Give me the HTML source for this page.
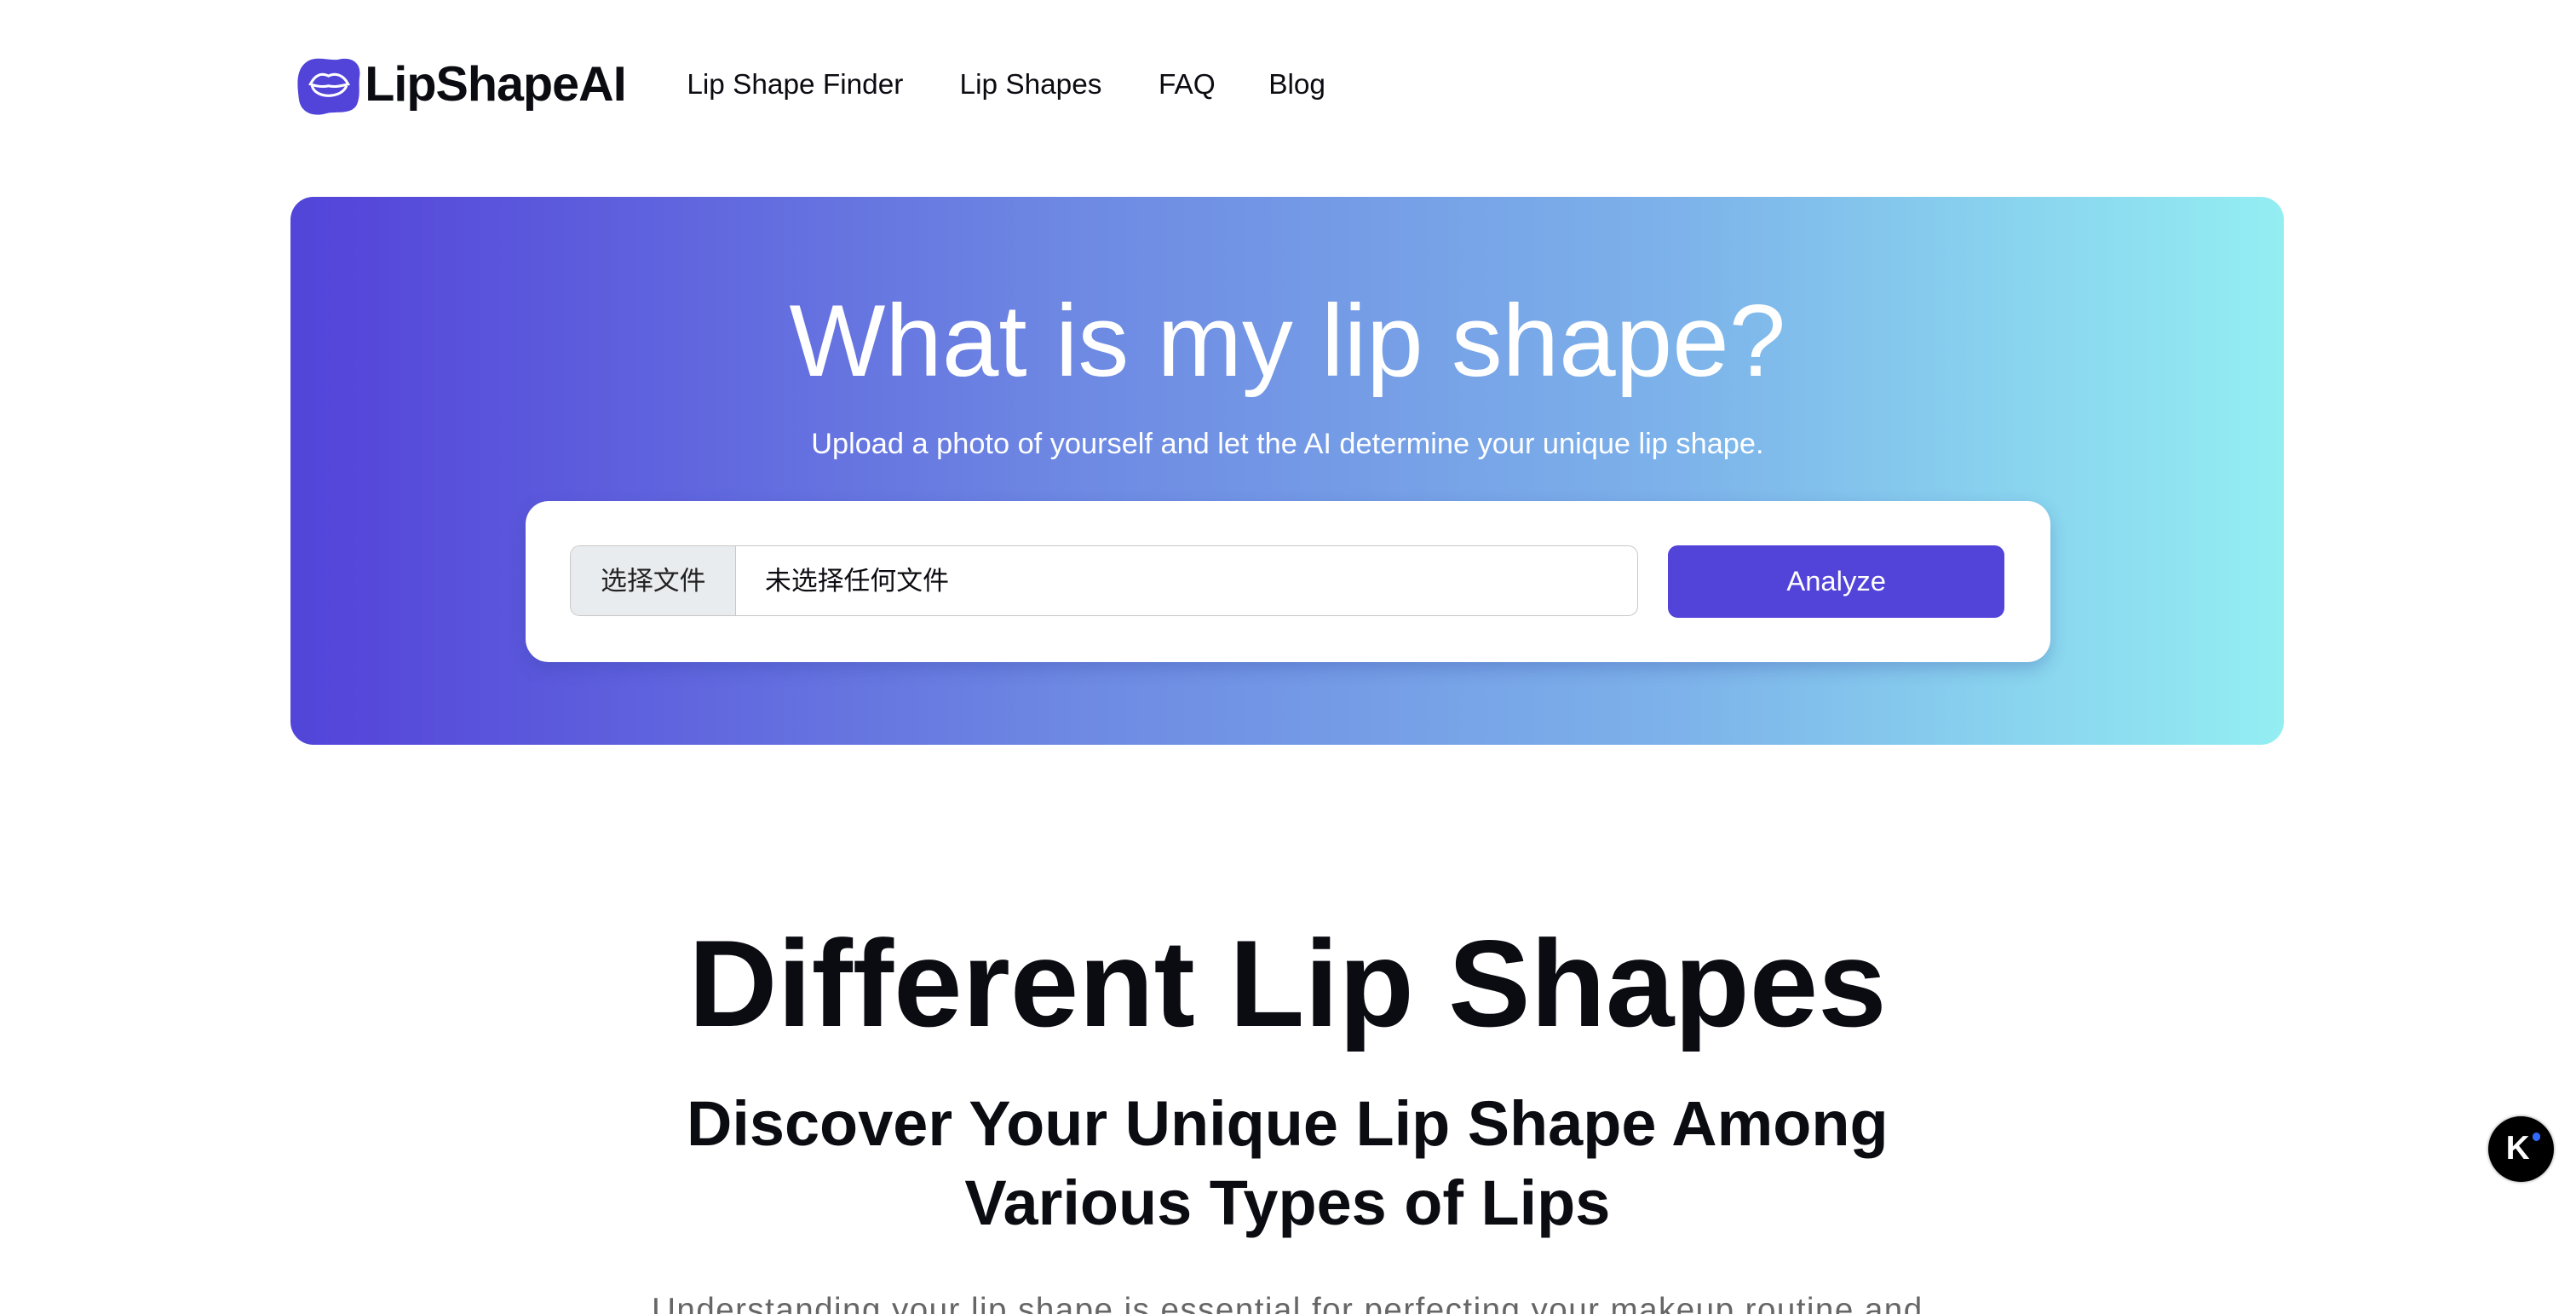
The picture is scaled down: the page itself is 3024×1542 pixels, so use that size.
<!DOCTYPE html>
<html><head><meta charset="utf-8"><style>
html,body{margin:0;padding:0;background:#fff;overflow:hidden}
body{width:3024px;height:1542px}
#w{zoom:1.929;width:1568px;height:800px;position:relative;font-family:"Liberation Sans","Noto Sans CJK SC",sans-serif;color:#0b0b12}
.a{position:absolute;white-space:nowrap}
.nav{font-size:17.3px;top:42px}
.hero{left:177px;top:120px;width:1213px;height:333px;border-radius:14px;background:linear-gradient(90deg,#5146d9 0%,#5547da 3%,#6e8ae3 40%,#7db3ea 70%,#93eef2 100%)}
</style></head><body><div id="w">
<svg class="a" style="left:180px;top:34px" width="42" height="36" viewBox="0 0 42 36">
<path d="M6 4 C12 -1 20 3 26 2 C34 0 40 4 39 12 C38 18 40 24 37 30 C33 36 24 33 18 35 C10 37 3 34 2 26 C1 18 0 9 6 4Z" fill="#5243d9"/>
<path d="M9 17 C12 11 16 10 20 12 C24 10 29 11 32 17 C28 18 24 19 20 18 C16 19 12 18 9 17Z M10 18 C12 26 28 26 31 18" fill="none" stroke="#fff" stroke-width="1.6"/>
</svg>
<div class="a" style="left:222px;top:34px;font-size:29.8px;font-weight:700;letter-spacing:-0.5px">LipShapeAI</div>
<div class="a nav" style="left:418px">Lip Shape Finder</div>
<div class="a nav" style="left:584px">Lip Shapes</div>
<div class="a nav" style="left:705px">FAQ</div>
<div class="a nav" style="left:772px">Blog</div>
<div class="a hero"></div>
<div class="a" style="left:177px;width:1213px;text-align:center;top:172px;font-size:62px;color:#fff">What is my lip shape?</div>
<div class="a" style="left:177px;width:1213px;text-align:center;top:260px;font-size:17.8px;color:#fff">Upload a photo of yourself and let the AI determine your unique lip shape.</div>
<div class="a" style="left:320px;top:305px;width:928px;height:98px;background:#fff;border-radius:14px;box-shadow:0 4px 10px rgba(40,60,150,.25)"></div>
<div class="a" style="left:347px;top:332px;width:649px;height:42px;border:1px solid #c8c8c8;border-radius:6px;background:#fff;overflow:hidden">
<div style="position:absolute;left:0;top:0;width:100px;height:42px;background:#e9ecef;border-right:1px solid #c8c8c8;font-size:16px;line-height:42px;text-align:center;color:#222">选择文件</div>
<div style="position:absolute;left:118px;top:0;font-size:16px;line-height:42px">未选择任何文件</div></div>
<div class="a" style="left:1015px;top:332px;width:205px;height:44px;background:#5243d9;border-radius:6px;color:#fff;font-size:17px;line-height:44px;text-align:center">Analyze</div>
<div class="a" style="left:177px;width:1213px;text-align:center;top:555px;font-size:75px;font-weight:700">Different Lip Shapes</div>
<div class="a" style="left:177px;width:1213px;text-align:center;top:660px;font-size:38.3px;line-height:48px;font-weight:700">Discover Your Unique Lip Shape Among<br>Various Types of Lips</div>
<div class="a" style="left:177px;width:1213px;text-align:center;top:786px;font-size:20px;letter-spacing:0.75px;color:#666">Understanding your lip shape is essential for perfecting your makeup routine and</div>
<div class="a" style="left:1514px;top:679px;width:40px;height:40px;border-radius:50%;background:#000;box-shadow:0 0 2px #888">
<div style="position:absolute;left:11px;top:10px;color:#fff;font-weight:700;font-size:20px;line-height:20px">K</div>
<div style="position:absolute;left:27px;top:10px;width:5px;height:5px;border-radius:50%;background:#2f6bff"></div></div>
</div></body></html>
